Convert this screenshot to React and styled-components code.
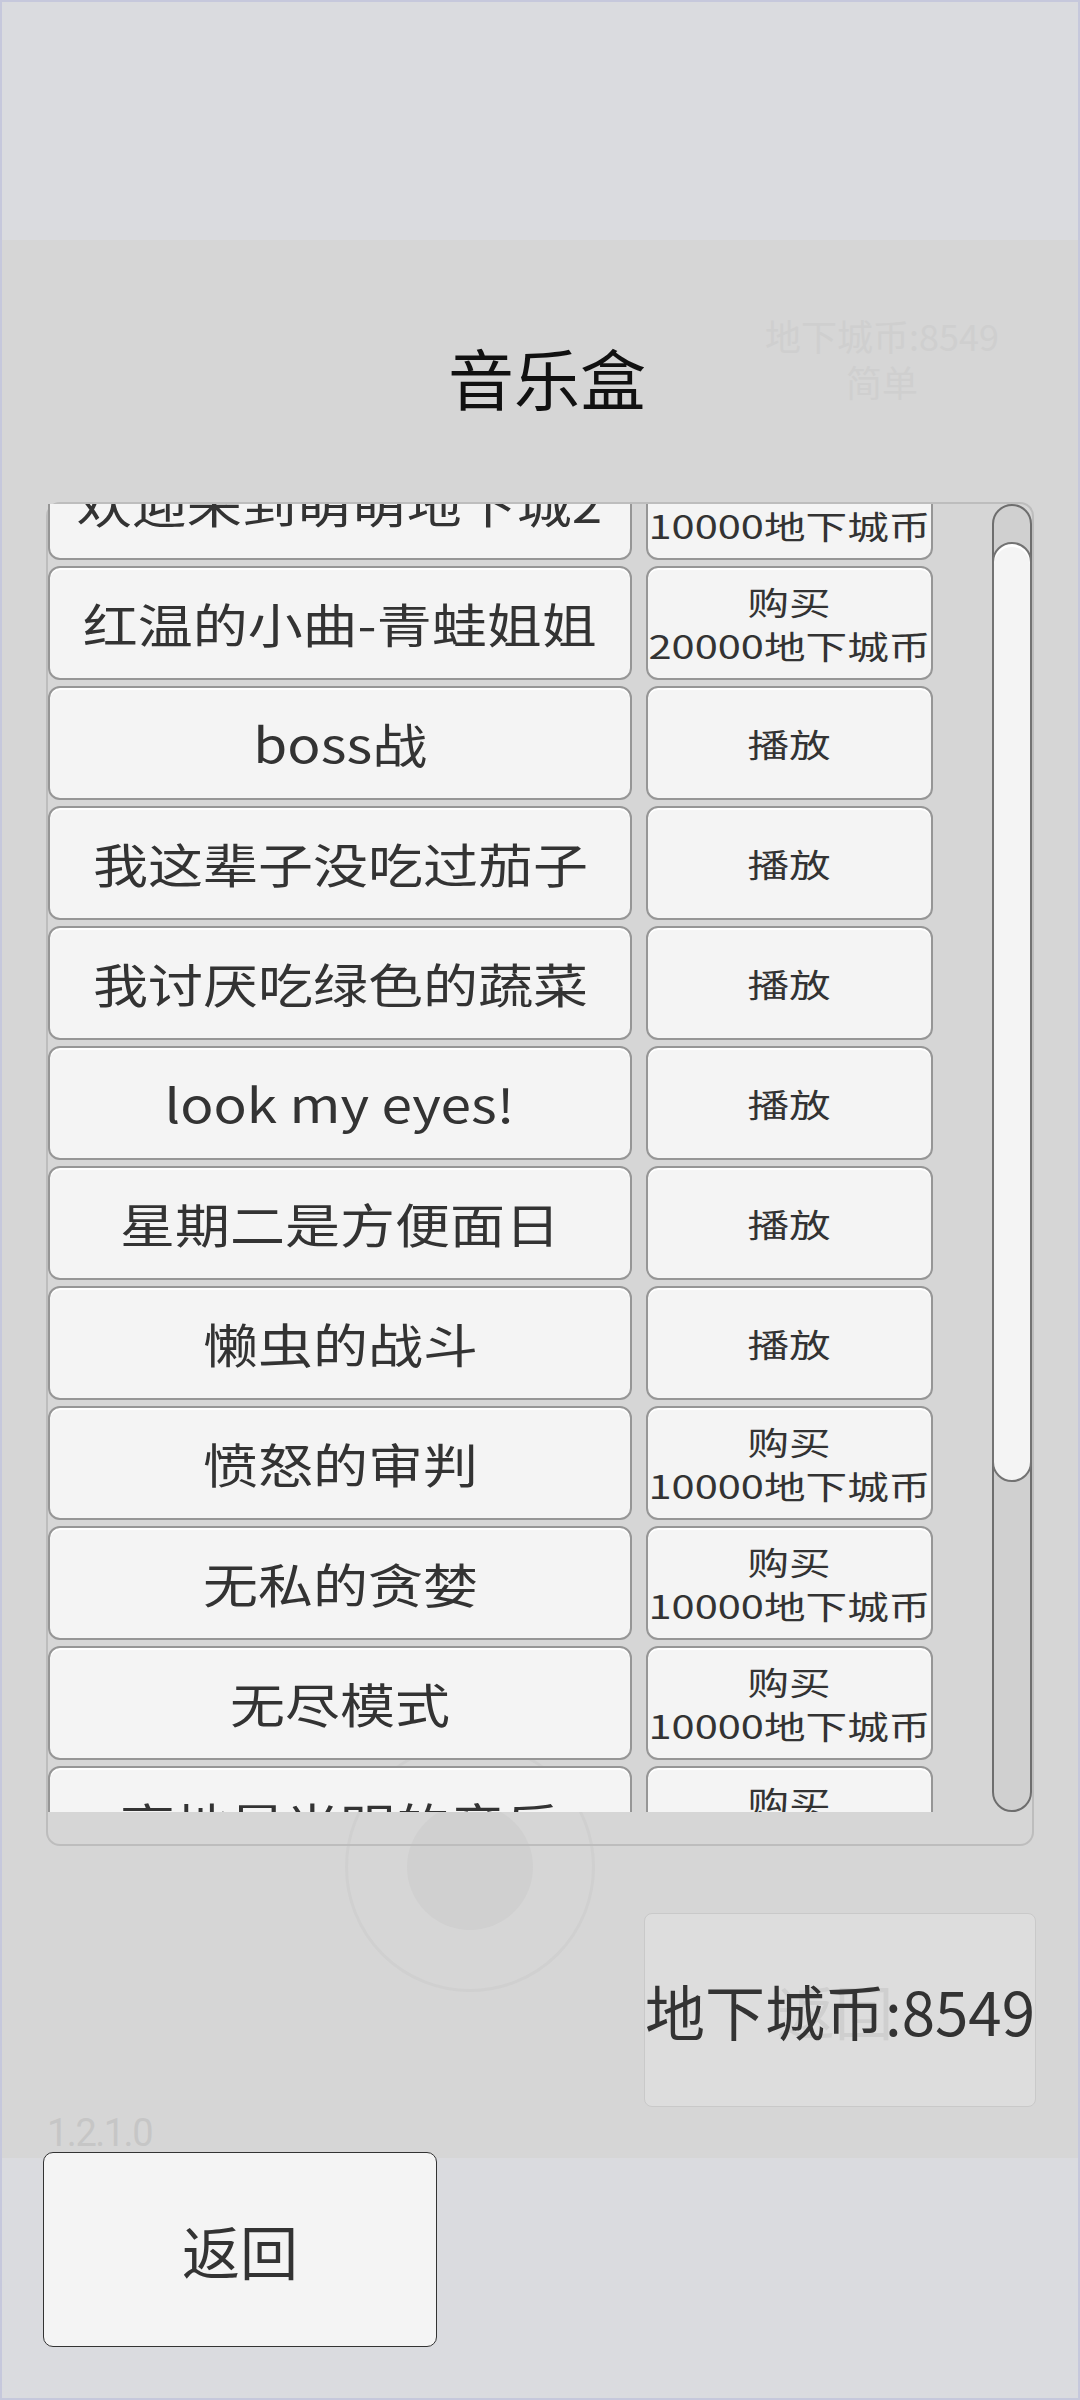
import React from 'react';
import styled, { createGlobalStyle } from 'styled-components';

const GlobalStyle = createGlobalStyle`
  html, body {
    margin: 0;
    padding: 0;
    background: #dadbdf;
  }
  body {
    font-family: "Noto Sans CJK SC", "Noto Sans", sans-serif;
  }
`;

const Screen = styled.div`
  width: 1080px;
  height: 2400px;
  box-sizing: border-box;
  border: 2px solid #c6c8dc;
  background: #dadbdf;
  display: flex;
  flex-direction: column;
  overflow: hidden;
`;

const TopBar = styled.div`
  height: 238px;
  flex-shrink: 0;
`;

const Panel = styled.div`
  position: relative;
  z-index: 0;
  height: 1918px;
  flex-shrink: 0;
  background: #d6d6d6;
  display: flex;
  flex-direction: column;
`;

const Ghost = styled.div`
  position: absolute;
  z-index: -1;
  color: #cfcfcf;
  text-align: center;
  white-space: nowrap;
`;

const GhostStat = styled(Ghost)`
  top: 72px;
  left: 758px;
  width: 244px;
  font-size: 36px;
  line-height: 46px;
`;

const GhostRing = styled(Ghost)`
  top: 1502px;
  left: 343px;
  width: 250px;
  height: 250px;
  box-sizing: border-box;
  border: 3px solid #d0d0d0;
  border-radius: 50%;
  display: flex;
  align-items: center;
  justify-content: center;
`;

const GhostKnob = styled.div`
  width: 126px;
  height: 126px;
  border-radius: 50%;
  background: #d0d0d0;
`;

const Header = styled.div`
  height: 262px;
  box-sizing: border-box;
  padding: 103px 0 0 14px;
  display: flex;
  justify-content: center;
`;

const Title = styled.h1`
  margin: 0;
  font-size: 66px;
  line-height: 66px;
  font-weight: 400;
  color: #111;
`;

const ListBox = styled.div`
  margin-left: 44px;
  width: 988px;
  height: 1344px;
  box-sizing: border-box;
  border: 2px solid #bdbdbd;
  border-radius: 14px;
  flex-shrink: 0;
`;

const ListRow = styled.div`
  display: flex;
  height: 1308px;
`;

const Viewport = styled.div`
  width: 890px;
  height: 100%;
  overflow: hidden;
`;

const Rows = styled.div`
  display: flex;
  flex-direction: column;
  gap: 6px;
  margin-top: ${({ $offset }) => -$offset}px;
`;

const Row = styled.div`
  display: flex;
  gap: 14px;
  height: 114px;
  flex-shrink: 0;
`;

const Button = styled.div`
  box-sizing: border-box;
  height: 100%;
  background: #f4f4f4;
  border: 2px solid #969696;
  border-radius: 12px;
  box-shadow: inset 0 2px 0 #ffffff;
  display: flex;
  flex-direction: column;
  align-items: center;
  justify-content: center;
  color: #333;
  overflow: hidden;
`;

const NameButton = styled(Button)`
  width: 584px;
`;

const ActionButton = styled(Button)`
  width: 287px;
`;

const Label = styled.span`
  display: inline-block;
  white-space: nowrap;
  font-size: ${({ $size }) => $size}px;
  line-height: ${({ $lh }) => $lh}px;
  transform: scaleX(${({ $sx }) => $sx});
`;

const Track = styled.div`
  margin-left: auto;
  width: 40px;
  height: 100%;
  box-sizing: border-box;
  border: 2px solid #6e6e6e;
  border-radius: 20px;
  background: #d0d0d0;
  display: flex;
  flex-direction: column;
`;

const Thumb = styled.div`
  margin: 0 -2px;
  box-sizing: border-box;
  border: 2px solid #737373;
  border-radius: 20px;
  background: #f4f4f4;
  box-shadow: inset 0 3px 0 #ffffff;
`;

const CoinRow = styled.div`
  margin-top: 67px;
  display: flex;
  justify-content: flex-end;
  padding-right: 42px;
`;

const CoinBox = styled.div`
  position: relative;
  width: 392px;
  height: 194px;
  box-sizing: border-box;
  background: #dddddd;
  border: 1.5px solid #c9c9c9;
  border-radius: 8px;
  display: flex;
  align-items: center;
  justify-content: center;
`;

const CoinGhost = styled.span`
  position: absolute;
  left: 132px;
  top: 50%;
  transform: translateY(-50%);
  font-size: 58px;
  line-height: 58px;
  color: #cfcfcf;
`;

const CoinText = styled.span`
  position: relative;
  font-size: 60px;
  line-height: 60px;
  color: #333;
  white-space: nowrap;
`;

const Version = styled.div`
  margin: 6px 0 0 45px;
  font-family: Roboto, "Liberation Sans", sans-serif;
  font-size: 38px;
  line-height: 40px;
  color: #c6c6c6;
  letter-spacing: -1.5px;
`;

const Bottom = styled.div`
  flex: 1;
  padding-left: 41px;
`;

const BackButton = styled.div`
  position: relative;
  z-index: 1;
  margin-top: -6px;
  width: 394px;
  height: 195px;
  box-sizing: border-box;
  background: #f4f4f4;
  border: 1.5px solid #333;
  border-radius: 10px;
  display: flex;
  align-items: center;
  justify-content: center;
  font-size: 58px;
  color: #333;
`;

const songs = [
  { name: '欢迎来到萌萌地下城2', price: 10000 },
  { name: '红温的小曲-青蛙姐姐', price: 20000 },
  { name: 'boss战' },
  { name: '我这辈子没吃过茄子' },
  { name: '我讨厌吃绿色的蔬菜' },
  { name: 'look my eyes!' },
  { name: '星期二是方便面日' },
  { name: '懒虫的战斗' },
  { name: '愤怒的审判', price: 10000 },
  { name: '无私的贪婪', price: 10000 },
  { name: '无尽模式', price: 10000 },
  { name: '高地是光明的音乐', price: 10000 },
];

const SongRow = ({ song }) => (
  <Row>
    <NameButton>
      <Label $size={47} $lh={56} $sx={1.17}>{song.name}</Label>
    </NameButton>
    <ActionButton>
      {song.price ? (
        <>
          <Label $size={32} $lh={44} $sx={1.3}>购买</Label>
          <Label $size={32} $lh={44} $sx={1.3}>{song.price}地下城币</Label>
        </>
      ) : (
        <Label $size={32} $lh={44} $sx={1.3}>播放</Label>
      )}
    </ActionButton>
  </Row>
);

const App = () => {
  const scrollTop = 58;
  const thumbTop = 36;
  const thumbHeight = 940;

  return (
    <>
      <GlobalStyle />
      <Screen>
        <TopBar />
        <Panel>
          <GhostStat>
            地下城币:8549
            <br />
            简单
          </GhostStat>
          <GhostRing>
            <GhostKnob />
          </GhostRing>

          <Header>
            <Title>音乐盒</Title>
          </Header>

          <ListBox>
            <ListRow>
              <Viewport>
                <Rows $offset={scrollTop}>
                  {songs.map((song) => (
                    <SongRow key={song.name} song={song} />
                  ))}
                </Rows>
              </Viewport>
              <Track>
                <Thumb style={{ marginTop: thumbTop, height: thumbHeight }} />
              </Track>
            </ListRow>
          </ListBox>

          <CoinRow>
            <CoinBox>
              <CoinGhost>返回</CoinGhost>
              <CoinText>地下城币:8549</CoinText>
            </CoinBox>
          </CoinRow>

          <Version>1.2.1.0</Version>
        </Panel>
        <Bottom>
          <BackButton>返回</BackButton>
        </Bottom>
      </Screen>
    </>
  );
};

export default App;
